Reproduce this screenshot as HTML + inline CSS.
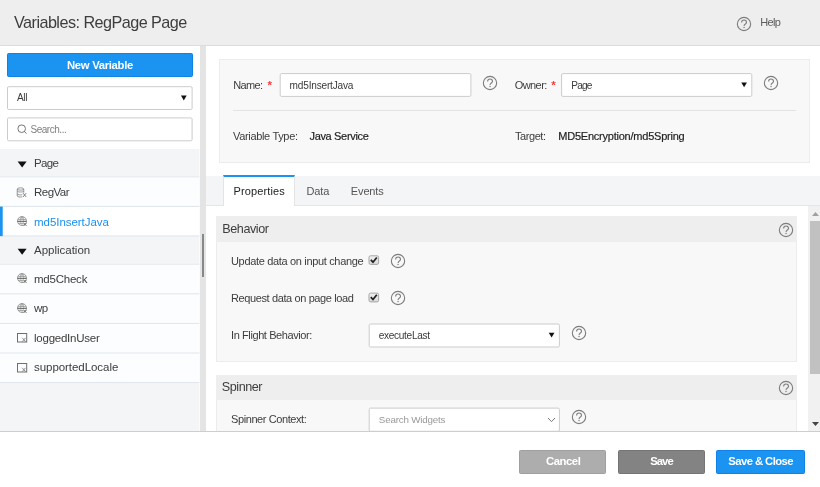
<!DOCTYPE html>
<html>
<head>
<meta charset="utf-8">
<style>
*{box-sizing:border-box;margin:0;padding:0}
html,body{width:820px;height:487px;overflow:hidden;background:#fff}
body{font-family:"Liberation Sans",sans-serif;font-size:11px;color:#333;position:relative}
#wrap{position:absolute;left:0;top:0;width:820px;height:487px;overflow:hidden;will-change:transform;background:#fff}
.abs{position:absolute}
.t{position:absolute;white-space:pre;line-height:0;display:block}
#hdr{left:0;top:0;width:820px;height:46px;background:#eeeeee;border-bottom:1px solid #dddddd}
#left{left:0;top:46px;width:200px;height:386px;background:#fff}
#gutter{left:200px;top:46px;width:6px;height:386px;background:#e4e4e4}
#handle{left:202px;top:234px;width:2px;height:43px;background:#888}
.btn{border-radius:1.5px;border:1px solid transparent}
#footer{left:0;top:431px;width:820px;height:56px;background:#fff;border-top:1px solid #cecece}
#card{left:219px;top:59px;width:591px;height:104px;background:#f8f8f8;border:1px solid #ececec}
#tabs{left:205.5px;top:176px;width:615px;height:30px;background:#f4f5f7;border-bottom:1px solid #e6e6e6}
#tabp{left:223px;top:175px;width:72px;height:31px;background:#fff;border-top:2px solid #1a93f1;border-left:1px solid #e4e4e4;border-right:1px solid #e4e4e4}
.sechdr{left:216px;width:581px;height:26px;background:#eeeeee}
.secbody{left:216px;width:581px;background:#f8f8f8;border:1px solid #ececec;border-top:none}
#sbar{left:808px;top:206px;width:12px;height:225px;background:#f1f1f1}
#thumb{left:809.5px;top:221.3px;width:11px;height:153px;background:#c1c1c1}
</style>
</head>
<body>
<div id="wrap">
<div id="hdr" class="abs"></div>
<svg width="0" height="0" style="position:absolute"><defs>
<g id="q"><circle cx="8" cy="8" r="6.65" fill="none" stroke="#7d7d7d" stroke-width="1.1"/><path d="M5.6 6.4 A2.45 2.45 0 0 1 10.5 6.4 C10.5 8.1 8.05 8 8.05 10" fill="none" stroke="#7d7d7d" stroke-width="1.1"/><circle cx="8.05" cy="11.5" r="0.7" fill="#7d7d7d"/></g>
<g id="globe" fill="none" stroke="#808080" stroke-width="0.75"><circle cx="5" cy="5" r="4.5"/><path d="M5 0.5 C3 2.6 3 7.4 5 9.5 M5 0.5 C7 2.6 7 7.4 5 9.5" stroke-width="0.4"/><path d="M3 1.9 H7 M1.2 3.4 H8.8 M1.4 7.3 H6.4" stroke-width="0.75"/><path d="M0.5 5.3 H9.5" stroke="#585858" stroke-width="1.05"/><path d="M6.7 6.9 L9.5 9.9 M9.5 6.9 L6.7 9.9" stroke="#686868" stroke-width="0.95"/></g>
<g id="db" fill="none" stroke="#808080" stroke-width="0.85"><ellipse cx="4.7" cy="2.1" rx="3.4" ry="1.2"/><path d="M1.3 2.1 V9.4 C1.3 10.4 4.5 10.8 6.6 10.2 M8.1 2.1 V6 M1.3 4.4 C1.3 5.5 8.1 5.5 8.1 4.4 M1.3 7.2 C1.3 8.3 4.8 8.5 6.6 8"/><path d="M7.4 6.4 L10.6 10.4 M10.6 6.4 L7.4 10.4" stroke="#787878" stroke-width="0.95"/></g>
<g id="box" fill="none" stroke="#6e6e6e" stroke-width="1"><rect x="0.5" y="0.5" width="9.2" height="8.5"/><path d="M5.2 4.8 L8.6 8.6 M8.6 4.8 L5.2 8.6" stroke-width="0.85" stroke="#777"/></g>
<g id="chk"><path d="M2 5 L4.2 7.2 L8.6 2.2" fill="none" stroke="#222" stroke-width="1.8"/></g>
</defs></svg>

<svg class="abs" style="left:736px;top:15.7px" width="16" height="16" viewBox="0 0 16 16"><use href="#q"/></svg>

<div id="left" class="abs"></div>
<div id="gutter" class="abs"></div>
<div id="handle" class="abs"></div>
<div class="abs btn" style="left:7px;top:53px;width:185.5px;height:24px;background:#1a93f1;border-color:#0e82e6"></div>

<svg class="abs" style="left:0;top:0" width="210" height="487" viewBox="0 0 210 487">
<rect x="0" y="149" width="199.4" height="283" fill="#f4f5f7"/>
<rect x="0" y="177.3" width="199.4" height="28.6" fill="#fcfdff"/>
<rect x="0" y="206.9" width="199.4" height="28.6" fill="#ffffff"/>
<rect x="0" y="264.7" width="199.4" height="117.4" fill="#fcfdff"/>
<g fill="#dfe6eb">
<rect x="0" y="176.3" width="199.4" height="1" fill="#e6eaee"/>
<rect x="0" y="205.9" width="199.4" height="1"/>
<rect x="0" y="235.5" width="199.4" height="1"/>
<rect x="0" y="263.7" width="199.4" height="1" fill="#e6eaee"/>
<rect x="0" y="293.3" width="199.4" height="1"/>
<rect x="0" y="322.9" width="199.4" height="1"/>
<rect x="0" y="352.5" width="199.4" height="1"/>
<rect x="0" y="382.1" width="199.4" height="1"/>
</g>
<rect x="0" y="206.6" width="2.7" height="29.5" fill="#1a93f1"/>
<path d="M17.6 161.6 H26.6 L22.1 167.5 Z" fill="#111"/>
<path d="M17.6 248.8 H26.6 L22.1 254.7 Z" fill="#111"/>
</svg>
<svg class="abs" style="left:15.9px;top:186.8px" width="11.5" height="11.5" viewBox="0 0 12 12"><use href="#db"/></svg>
<svg class="abs" style="left:16.7px;top:215.8px" width="11" height="11" viewBox="0 0 11 11"><use href="#globe"/></svg>
<svg class="abs" style="left:16.7px;top:273.4px" width="11" height="11" viewBox="0 0 11 11"><use href="#globe"/></svg>
<svg class="abs" style="left:16.7px;top:302.6px" width="11" height="11" viewBox="0 0 11 11"><use href="#globe"/></svg>
<svg class="abs" style="left:16.6px;top:333.2px" width="11" height="11" viewBox="0 0 11 11"><use href="#box"/></svg>
<svg class="abs" style="left:16.6px;top:362.9px" width="11" height="11" viewBox="0 0 11 11"><use href="#box"/></svg>

<div id="card" class="abs"></div>
<svg class="abs" style="left:482px;top:75.2px" width="16" height="16" viewBox="0 0 16 16"><use href="#q"/></svg>
<svg class="abs" style="left:763.2px;top:75.2px" width="16" height="16" viewBox="0 0 16 16"><use href="#q"/></svg>
<div class="abs" style="left:233px;top:110px;width:562.5px;height:1px;background:#e3e3e3"></div>
<span class="t" style="left:267.4px;top:84.9px;font-size:11.5px;color:#f53b3b;font-weight:700">*</span>
<span class="t" style="left:551.3px;top:84.9px;font-size:11.5px;color:#f53b3b;font-weight:700">*</span>

<div id="tabs" class="abs"></div>
<div id="tabp" class="abs"></div>

<div class="abs sechdr" style="top:216px"></div>
<svg class="abs" style="left:777.6px;top:221.6px" width="16" height="16" viewBox="0 0 16 16"><use href="#q"/></svg>
<div class="abs secbody" style="top:242px;height:120px"></div>
<svg class="abs" style="left:390.3px;top:252.7px" width="16" height="16" viewBox="0 0 16 16"><use href="#q"/></svg>
<svg class="abs" style="left:390.3px;top:290.1px" width="16" height="16" viewBox="0 0 16 16"><use href="#q"/></svg>
<svg class="abs" style="left:570.6px;top:324.9px" width="16" height="16" viewBox="0 0 16 16"><use href="#q"/></svg>

<div class="abs sechdr" style="top:375px;height:25px"></div>
<svg class="abs" style="left:777.7px;top:379.8px" width="16" height="16" viewBox="0 0 16 16"><use href="#q"/></svg>
<div class="abs secbody" style="top:400px;height:40px"></div>
<svg class="abs" style="left:570.6px;top:408.5px" width="16" height="16" viewBox="0 0 16 16"><use href="#q"/></svg>

<svg class="abs" style="left:0;top:0" width="820" height="487" viewBox="0 0 820 487">
<defs><linearGradient id="cbg" x1="0" y1="0" x2="0" y2="1"><stop offset="0" stop-color="#f0f0f0"/><stop offset="1" stop-color="#dadada"/></linearGradient></defs>
<rect x="7.50" y="86.70" width="184.60" height="22.80" rx="1.3" fill="#fff" stroke="#cccccc"/>
<path d="M180.95 95.50 H186.65 L183.80 100.40 Z" fill="#111"/>
<rect x="7.50" y="117.90" width="184.60" height="22.90" rx="1.3" fill="#fff" stroke="#cccccc"/>
<rect x="280.20" y="73.60" width="190.70" height="22.80" rx="1.3" fill="#fff" stroke="#cccccc"/>
<rect x="561.60" y="73.60" width="190.20" height="22.80" rx="1.3" fill="#fff" stroke="#cccccc"/>
<path d="M741.25 82.40 H746.95 L744.10 87.30 Z" fill="#111"/>
<rect x="369.20" y="324.00" width="190.20" height="23.00" rx="1.3" fill="#fff" stroke="#cccccc"/>
<path d="M548.75 332.70 H554.45 L551.60 337.60 Z" fill="#111"/>
<rect x="369.20" y="408.10" width="190.20" height="23.20" rx="1.3" fill="#fff" stroke="#cccccc"/>
<rect x="369.00" y="255.80" width="9.60" height="8.60" rx="1.6" fill="url(#cbg)" stroke="#a5a5a5"/><path d="M370.80 259.90 L373.00 262.20 L376.80 257.50" fill="none" stroke="#222" stroke-width="1.8"/>
<rect x="369.00" y="293.10" width="9.60" height="8.80" rx="1.6" fill="url(#cbg)" stroke="#a5a5a5"/><path d="M370.80 297.20 L373.00 299.50 L376.80 294.80" fill="none" stroke="#222" stroke-width="1.8"/>
</svg>
<svg class="abs" style="left:16.5px;top:124px" width="11" height="11" viewBox="0 0 11 11"><circle cx="4.7" cy="4.7" r="3.8" fill="none" stroke="#666" stroke-width="0.9"/><path d="M7.4 7.4 L9.4 9.6" stroke="#666" stroke-width="0.9"/></svg>
<svg class="abs" style="left:546.5px;top:416.5px" width="9" height="6" viewBox="0 0 9 6"><path d="M1 1 L4.5 4.6 L8 1" fill="none" stroke="#777" stroke-width="1"/></svg>
<div id="sbar" class="abs"></div>
<div id="thumb" class="abs"></div>
<svg class="abs" style="left:811.8px;top:211.8px" width="7" height="4" viewBox="0 0 7 4"><path d="M0 4 L3.5 0 L7 4 Z" fill="#a0a0a0"/></svg>
<svg class="abs" style="left:811.8px;top:421.5px" width="7" height="4" viewBox="0 0 7 4"><path d="M0 0 L3.5 4 L7 0 Z" fill="#444"/></svg>

<div id="footer" class="abs"></div>
<div class="abs btn" style="left:519px;top:449.5px;width:87px;height:24.5px;background:#adadad;border-color:#9f9f9f"></div>
<div class="abs btn" style="left:618px;top:449.5px;width:87px;height:24.5px;background:#838383;border-color:#757575"></div>
<div class="abs btn" style="left:716px;top:449.5px;width:89px;height:24.5px;background:#1a93f1;border-color:#0e82e6"></div>

<span class="t" style="left:14.00px;top:22.09px;font-size:16.2px;letter-spacing:-0.536px;color:#3d3d3d;font-weight:400;">Variables: RegPage Page</span>
<span class="t" style="left:760.20px;top:21.89px;font-size:11px;letter-spacing:-0.608px;color:#5c5c5c;font-weight:400;">Help</span>
<span class="t" style="left:67.00px;top:64.83px;font-size:11.3px;letter-spacing:-0.309px;color:#fff;font-weight:700;">New Variable</span>
<span class="t" style="left:17.00px;top:98.00px;font-size:10.1px;letter-spacing:-0.359px;color:#3a3a3a;font-weight:400;">All</span>
<span class="t" style="left:30.50px;top:129.53px;font-size:10px;letter-spacing:-0.473px;color:#808080;font-weight:400;">Search...</span>
<span class="t" style="left:33.90px;top:163.02px;font-size:11.5px;letter-spacing:-0.620px;color:#3d3d3d;font-weight:400;">Page</span>
<span class="t" style="left:34.00px;top:192.12px;font-size:11.5px;letter-spacing:-0.528px;color:#3d3d3d;font-weight:400;">RegVar</span>
<span class="t" style="left:34.00px;top:221.62px;font-size:11.5px;letter-spacing:-0.045px;color:#1a90ef;font-weight:400;">md5InsertJava</span>
<span class="t" style="left:34.00px;top:250.02px;font-size:11.5px;letter-spacing:-0.007px;color:#3d3d3d;font-weight:400;">Application</span>
<span class="t" style="left:34.00px;top:278.52px;font-size:11.5px;letter-spacing:-0.224px;color:#3d3d3d;font-weight:400;">md5Check</span>
<span class="t" style="left:34.00px;top:308.02px;font-size:11.5px;letter-spacing:-0.603px;color:#3d3d3d;font-weight:400;">wp</span>
<span class="t" style="left:34.00px;top:337.72px;font-size:11.5px;letter-spacing:-0.237px;color:#3d3d3d;font-weight:400;">loggedInUser</span>
<span class="t" style="left:34.00px;top:367.32px;font-size:11.5px;letter-spacing:-0.053px;color:#3d3d3d;font-weight:400;">supportedLocale</span>
<span class="t" style="left:233.20px;top:85.09px;font-size:11px;letter-spacing:-0.602px;color:#3d3d3d;font-weight:400;">Name:</span>
<span class="t" style="left:289.60px;top:85.70px;font-size:10.1px;letter-spacing:-0.200px;color:#3a3a3a;font-weight:400;">md5InsertJava</span>
<span class="t" style="left:514.70px;top:85.09px;font-size:11px;letter-spacing:-0.574px;color:#3d3d3d;font-weight:400;">Owner:</span>
<span class="t" style="left:571.20px;top:85.70px;font-size:10.1px;letter-spacing:-0.793px;color:#3a3a3a;font-weight:400;">Page</span>
<span class="t" style="left:233.00px;top:136.19px;font-size:11px;letter-spacing:-0.332px;color:#3d3d3d;font-weight:400;">Variable Type:</span>
<span class="t" style="left:309.50px;top:136.19px;font-size:11px;letter-spacing:-0.335px;color:#222;font-weight:400;-webkit-text-stroke:0.18px #222">Java Service</span>
<span class="t" style="left:515.00px;top:136.19px;font-size:11px;letter-spacing:-0.440px;color:#3d3d3d;font-weight:400;">Target:</span>
<span class="t" style="left:558.30px;top:136.19px;font-size:11px;letter-spacing:-0.230px;color:#222;font-weight:400;-webkit-text-stroke:0.18px #222">MD5Encryption/md5Spring</span>
<span class="t" style="left:233.50px;top:190.69px;font-size:11px;letter-spacing:0.129px;color:#222;font-weight:400;">Properties</span>
<span class="t" style="left:306.50px;top:190.69px;font-size:11px;letter-spacing:-0.150px;color:#555;font-weight:400;">Data</span>
<span class="t" style="left:350.80px;top:190.69px;font-size:11px;letter-spacing:-0.128px;color:#555;font-weight:400;">Events</span>
<span class="t" style="left:222.30px;top:228.53px;font-size:12.6px;letter-spacing:-0.431px;color:#3d3d3d;font-weight:400;">Behavior</span>
<span class="t" style="left:231.00px;top:260.69px;font-size:11px;letter-spacing:-0.334px;color:#3d3d3d;font-weight:400;">Update data on input change</span>
<span class="t" style="left:231.00px;top:298.39px;font-size:11px;letter-spacing:-0.384px;color:#3d3d3d;font-weight:400;">Request data on page load</span>
<span class="t" style="left:231.00px;top:334.99px;font-size:11px;letter-spacing:-0.403px;color:#3d3d3d;font-weight:400;">In Flight Behavior:</span>
<span class="t" style="left:378.80px;top:336.00px;font-size:10.1px;letter-spacing:-0.324px;color:#3a3a3a;font-weight:400;">executeLast</span>
<span class="t" style="left:221.80px;top:386.63px;font-size:12.6px;letter-spacing:-0.454px;color:#3d3d3d;font-weight:400;">Spinner</span>
<span class="t" style="left:231.00px;top:418.79px;font-size:11px;letter-spacing:-0.409px;color:#3d3d3d;font-weight:400;">Spinner Context:</span>
<span class="t" style="left:378.80px;top:419.80px;font-size:9.8px;letter-spacing:-0.189px;color:#999;font-weight:400;">Search Widgets</span>
<span class="t" style="left:546.00px;top:460.98px;font-size:11.3px;letter-spacing:-0.449px;color:#fff;font-weight:700;">Cancel</span>
<span class="t" style="left:650.20px;top:460.98px;font-size:11.3px;letter-spacing:-0.964px;color:#fff;font-weight:700;">Save</span>
<span class="t" style="left:728.30px;top:460.98px;font-size:11.3px;letter-spacing:-0.581px;color:#fff;font-weight:700;">Save &amp; Close</span>
</div>
</body>
</html>
